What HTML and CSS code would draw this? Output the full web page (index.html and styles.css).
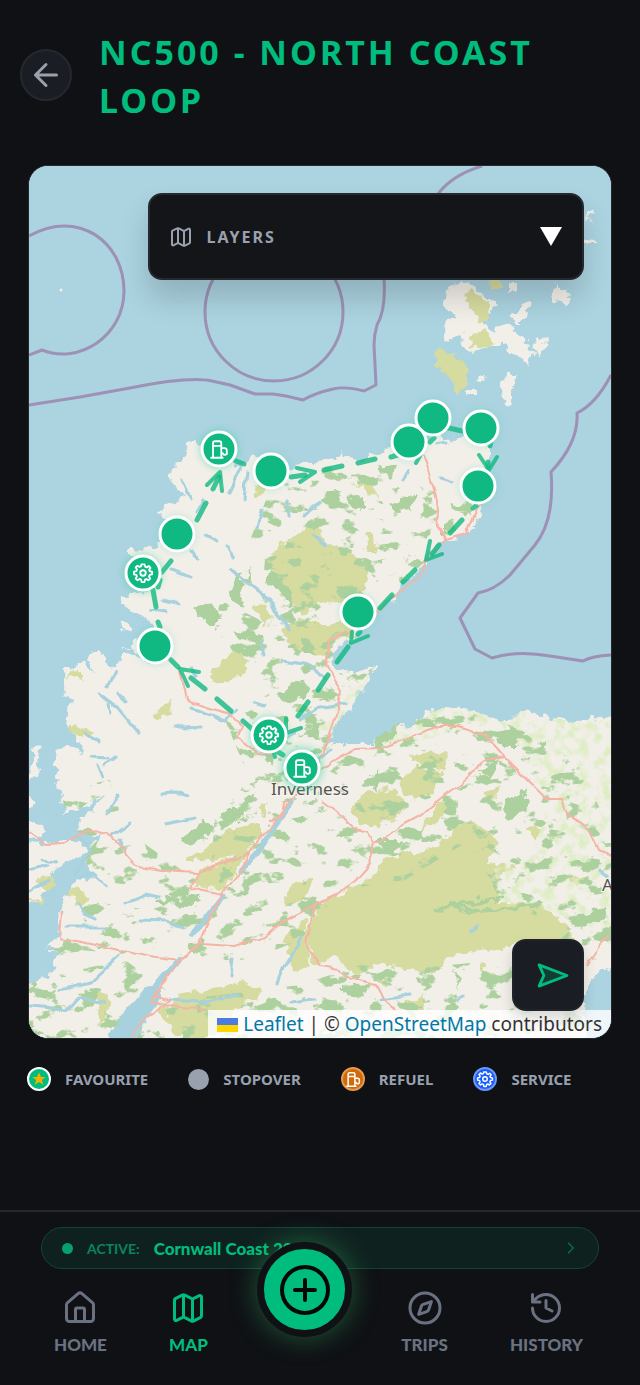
FILE: index.html
```html
<!DOCTYPE html>
<html lang="en">
<head>
<meta charset="utf-8">
<meta name="viewport" content="width=device-width, initial-scale=1">
<title>NC500 - North Coast Loop</title>
<link rel="stylesheet" href="styles.css">
</head>
<body>
<svg class="sprite" aria-hidden="true">
  <symbol id="i-map" viewBox="0 0 24 24"><path d="M14.106 5.553a2 2 0 0 0 1.788 0l3.659-1.83A1 1 0 0 1 21 4.619v12.764a1 1 0 0 1-.553.894l-4.553 2.277a2 2 0 0 1-1.788 0l-4.212-2.106a2 2 0 0 0-1.788 0l-3.659 1.83A1 1 0 0 1 3 19.381V6.618a1 1 0 0 1 .553-.894l4.553-2.277a2 2 0 0 1 1.788 0zM15 5.764v15M9 3.236v15"/></symbol>
  <symbol id="i-gear" viewBox="-12 -12 24 24"><path d="M-1.700 -9.500H1.700L2.300 -7.000L4.200 -6.100L6.300 -7.700L8.200 -5.600L6.700 -3.400L7.300 -1.900L9.900 -1.500V1.500L7.300 2.100L6.500 3.900L7.900 6.000L5.900 8.000L3.700 6.600L2.200 7.200L1.600 9.900H-1.500L-2.100 7.200L-3.800 6.500L-6.000 8.000L-8.000 6.000L-6.600 3.800L-7.300 2.000L-9.900 1.500V-1.500L-7.200 -2.100L-6.500 -3.800L-8.000 -6.000L-6.000 -8.000L-3.800 -6.600L-2.200 -7.200Z"/><circle r="3"/></symbol>
  <symbol id="i-fuel" viewBox="-12 -12 24 24"><path d="M-8.500 9.500H4M-6.500 9.500V-6.500a2 2 0 0 1 2-2H.5a2 2 0 0 1 2 2V9.500M-6.500 -3.500H2.500M2.500 -1H6a2.500 2.500 0 0 1 2.500 2.500V3.500a2 2 0 0 1-4 1.500L2.500 4"/></symbol>
</svg>

<header class="header">
  <button class="back" aria-label="Back"><svg viewBox="0 0 24 24"><path d="M19 12H5M12 19l-7-7 7-7"/></svg></button>
  <h1>NC500 - NORTH COAST LOOP</h1>
</header>

<main>
  <section class="map" aria-label="Route map">
    <svg class="map-canvas" viewBox="29 166 582 872">
      <defs>
        <filter id="rough" x="0" y="0" width="1" height="1"><feTurbulence type="fractalNoise" baseFrequency=".09" numOctaves="3" seed="4"/><feDisplacementMap in="SourceGraphic" scale="14" xChannelSelector="R" yChannelSelector="G"/></filter>
        <filter id="wobble" x="-.1" y="-.1" width="1.2" height="1.2"><feTurbulence type="fractalNoise" baseFrequency=".06" numOctaves="2" seed="9"/><feDisplacementMap in="SourceGraphic" scale="7" xChannelSelector="R" yChannelSelector="G"/></filter>
        <filter id="woods" x="0" y="0" width="1" height="1"><feTurbulence type="fractalNoise" baseFrequency=".05 .07" numOctaves="5" seed="12"/><feColorMatrix values="0 0 0 0 .68  0 0 0 0 .82  0 0 0 0 .62  0 0 0 14 -8.300"/><feComposite in2="SourceGraphic" operator="in"/></filter>
        <filter id="fields" x="0" y="0" width="1" height="1"><feTurbulence type="fractalNoise" baseFrequency=".09" numOctaves="4" seed="31"/><feColorMatrix values="0 0 0 0 .87  0 0 0 0 .93  0 0 0 0 .77  0 0 0 4 -1.800"/><feComposite in2="SourceGraphic" operator="in"/></filter>
        <filter id="soft" x="-1" y="-1" width="3" height="3"><feGaussianBlur stdDeviation="4"/></filter>
        <clipPath id="land-clip"><use href="#mainland"/></clipPath>
        <path id="mainland" d="M188 441L184 458L172 470L170 482L178 490L188 493L180 500L168 505L160 512L158 515L170 520L163 530L165 542L150 548L132 549L128 552L133 560L140 570L150 588L135 593L120 595L121 602L130 612L142 618L154 624L150 636L128 646L137 655L122 654L115 670L106 665L100 647L92 650L89 660L93 672L84 664L65 668L63 690L70 700L66 725L78 741L85 757L70 747L62 748L55 758L55 778L60 790L66 812L75 812L92 800L104 797L92 810L80 820L77 832L92 836L104 833L90 848L84 862L96 878L80 880L66 897L60 910L62 930L47 948L60 952L55 965L50 977L40 978L20 984V1048H113L133 1013L155 995L146 1020L132 1048H586L585 1010L586 990L592 978L603 972L620 962V715L600 720L570 721L545 716L522 711L500 722L475 711L450 706L425 712L408 730L402 724L385 736L371 744L345 744L333 743L326 750L329 739L342 716L352 707L361 690L373 674L379 664L366 672L358 676L352 670L337 672L332 664L333 655L338 644L352 640L358 632L370 620L380 607L393 597L405 582L420 572L427 558L433 548L445 540L463 537L470 530L482 515L486 500L486 475L492 456L490 442L494 436L470 433L455 442L445 441L436 431L430 436L425 446L400 452L388 450L375 456L355 460L343 458L341 450L334 459L320 459L314 464L300 464L286 470L262 462L252 454L245 463L236 468L226 450L205 447Z"/>
      </defs>
      <rect x="29" y="166" width="582" height="872" fill="#abd3e0"/>
      <g fill="none" stroke="#9d91b5" stroke-width="3" stroke-linejoin="round">
        <path d="M29 236C78 208 124 242 124 291C124 336 79 365 42 350L29 355M482 166Q452 175 438 194M29 405L80 397L130 388Q190 376 212 381L230 385L255 394H273L286 396L303 400Q315 393 333 389Q345 386 364 391L376 385L374 345Q374 335 377 325Q386 310 384 279M611 375Q596 404 577 413Q579 442 551 472Q555 520 535 545L510 575Q495 590 478 593L460 618L475 649L492 658Q517 650 550 656L583 661Q592 656 611 655"/>
        <circle cx="274" cy="312" r="69"/>
      </g>
      <circle cx="61" cy="290" r="1.500" fill="#f2efe9"/>

      <g filter="url(#rough)">
        <use href="#mainland" fill="#f2efe9"/>
        <path fill="#f2efe9" d="M446 290L462 281L476 290L497 305L490 314L477 318L492 330L505 327L512 325L514 336L525 340L533 351L530 365L517 357L504 345L490 345L475 353L464 346L463 333L448 343L444 325L455 314L444 306ZM533 345L545 337L544 350L538 353ZM511 315L530 302L528 320L516 320ZM549 303L556 286L552 282L567 290L572 297L566 305L559 298ZM503 375L519 375L512 390L512 405L504 407L501 393ZM466 391H477V397H466ZM480 375L489 373L484 382L478 383ZM587 213L594 209L590 222ZM587 234L596 243L586 243ZM508 282H517V293H508ZM36 750L42 747L37 773L25 785L31 765ZM25 785L34 804L25 812ZM25 822L42 823L46 831L39 838L25 835ZM25 839L47 845L66 838L90 846L80 860L67 862L55 868L48 882L37 902L25 906ZM124 645L128 648L122 648ZM121 620L128 622L129 631L119 630Z"/>
        <g fill="#d6dba0">
          <path d="M463 295L470 290L489 302L488 318L480 325L472 310ZM434 354L441 348L455 356L467 366L467 384L456 393L447 380L441 368L433 364ZM470 336L485 330L497 340L490 346L471 347ZM486 281H503V288L492 288Z"/>
          <path d="M265 568L275 547L290 540L306 529L318 524L325 543L345 551L360 558L369 580L365 590L343 600L320 604L303 614L292 603L280 595Z"/>
          <path d="M283 625L303 618L321 625L350 625L354 636L335 640L323 656L300 649L284 640ZM250 607L263 605L275 618L264 622ZM207 675L222 663L235 647L251 661L238 678L216 681ZM253 490L266 481L265 497L255 499ZM350 483L372 486L380 500L366 490ZM365 531L374 536L380 552L371 552Z"/>
          <path d="M186 858L203 849L232 829L262 823L262 837L248 852L228 856L208 862ZM192 885L198 872L224 860L247 851L240 868L224 891L205 887ZM284 905L291 885L313 878L302 900L286 908ZM397 778L418 768L441 772L435 793L406 796ZM350 810L365 792L394 788L404 802L399 818L367 828ZM407 755L450 752L444 770L412 763ZM418 834L440 803L450 805L433 825ZM485 794L500 786L494 805ZM525 828H542L537 842ZM567 874L586 879L575 886Z"/>
          <path d="M305 935L320 903L365 880L391 855L430 850L466 822L490 830L499 845L486 862L515 867L496 880L498 902L540 903L568 926L573 942L511 945L453 956L434 972L375 964L355 975L335 955L315 966Z"/>
          <path d="M160 1010L178 997L245 980L258 990L260 1000L240 1003L215 1038H175ZM285 935L305 918L310 966L292 972ZM68 728L80 724L95 732L85 737L72 737ZM152 715L175 701L170 713L158 717ZM35 880L48 874L55 884L43 890ZM68 893L78 885L91 902L78 904ZM30 900L45 898L38 906ZM96 990L109 995L107 1020L100 1025ZM65 680L75 667L82 678L74 675ZM255 810L267 805L264 815ZM480 963L494 975L484 972ZM408 1003L423 996L425 1010H405ZM378 980L390 979L384 990Z"/>
        </g>
      </g>

      <g clip-path="url(#land-clip)">
        <path filter="url(#fields)" d="M333 743L450 706L611 715V940L580 930L560 880L530 860L550 800L500 722L400 745ZM340 700L379 660L330 745L310 730ZM490 870L560 850L611 900V930L560 915L500 900Z"/>
        <path filter="url(#woods)" d="M322 720L400 720L450 706L535 725L575 760L611 830V960H540L570 930L500 900L470 840L405 880L340 890L300 940L250 960L190 960L80 950L29 1038V970L80 900L150 910L210 890L215 810L250 780L225 720L275 690L240 660L215 630L220 600L260 620L265 560L250 540L270 490L340 460L390 470L470 510L450 540L370 610L332 664L378 664Z"/>
        <path filter="url(#woods)" d="M62 790L110 780L125 830L210 890L180 900L60 880ZM300 985L360 965L400 970L500 960L585 1010V1038H29V980L125 960L180 1000Z"/>
      </g>
      <g fill="#add19e" filter="url(#rough)">
        <path d="M266 570L280 577L292 590L294 610L285 597L268 583ZM230 606L244 603L240 600L248 565L250 585L235 573ZM193 610L214 605L221 617L213 628ZM234 630L262 634L263 645L240 639ZM378 465L396 466L393 480L384 475ZM327 491L340 490L339 505L326 499ZM346 500L362 496L362 512L350 507ZM388 506L414 494L411 511L396 512ZM442 526L454 519L450 533L442 533ZM450 505L473 503L469 512L449 510ZM378 738L403 723L386 745L372 746ZM505 800L524 791L527 810L515 815L507 820ZM498 738L520 731L519 745H500ZM375 842L405 842L390 853ZM538 747L546 740V749ZM480 770L499 762L490 778ZM576 915L605 908L606 920L580 928ZM368 782L382 770L376 790ZM158 900L205 895L193 905L155 904ZM302 640L318 645L316 652H304ZM351 973H363L360 979H350ZM188 942H207L202 952L191 950ZM342 987L370 985L363 997L345 994ZM220 870L231 867L229 878L221 881ZM320 700L333 688L330 704ZM300 735L320 725L318 737ZM180 840L205 820L212 832L190 847ZM457 965L462 985L458 991ZM275 695L300 680L310 690L290 705ZM262 750L275 745L270 765ZM222 815L245 800L258 790L240 820L220 828Z"/>
        <path fill="none" stroke="#add19e" stroke-width="4" d="M435 910L465 904L485 900L505 897M450 903L470 912L540 905"/>
      </g>

      <g filter="url(#wobble)" fill="none" stroke="#a8d1de" stroke-width="3" stroke-linecap="round" stroke-linejoin="round">
        <path d="M292 803L273 830L257 853L241 870M224 896L203 922L192 935" stroke-width="5"/>
        <path d="M178 960L155 988" stroke-width="6"/>
        <path d="M151 996L119 1036" stroke-width="20"/>
        <path d="M231 570L249 584L262 594L273 605L278 616M230 492L242 467M244 500L247 472M205 534L217 542M172 570L190 577M190 552L197 558M257 528L262 510M287 501L289 516M100 694L118 708L138 732M85 732L100 742M118 692L126 703M108 686L115 672M90 757L108 758M97 765L102 777M108 813L119 795M165 824L195 818M160 793L176 792L188 796M176 726L187 729L202 728M190 668L195 677M138 655L150 662M112 835L130 822M120 840L125 850M76 835L90 850L75 875M80 878L94 874L107 886M127 903L145 895L159 898M140 920L165 921L183 927M67 927L108 927M78 905L84 914L94 919M120 955L90 983L60 990M29 1007L65 1010L80 997L103 1003M108 704L110 712M277 983L283 968L302 938M230 976L232 959M170 1000L200 1002L238 995M290 1003L315 1000M190 707L225 720L235 708M300 720L315 710L345 704M288 630L280 616M320 758L331 750M275 745L295 732M305 515L320 503M313 535L325 545M403 480L408 470M438 445L447 443M440 478L453 482M380 1000L410 996M457 1000L463 997M470 932L478 926M600 870L608 876M163 600L178 604M150 610L165 612M182 480L190 500M203 500L196 512M227 545L232 558"/>
        <path d="M29 870L48 865M30 890L50 880M41 860L57 862M105 765L115 757M255 703L265 706M283 661L310 665L325 680M260 640L264 655"/>
      </g>
      <g filter="url(#wobble)" fill="none" stroke="#f5b4a5" stroke-width="2" stroke-linejoin="round">
        <path d="M180 670L187 700L204 706L229 714L242 726L238 738L258 753L275 755M29 832L48 845L61 844L78 833L107 832L124 849L126 855L135 865L160 870L198 872L216 865L238 860L250 851L241 870L223 894L207 923L199 943L178 961L155 996L151 1002L165 1005L178 1008L205 1009M155 996L170 1001L140 1022L132 1038M198 872L191 888L223 895M250 851L272 826L292 800L305 780L327 766L355 749L380 748L440 727L458 727L485 735L505 757L531 783L548 799H562L568 815L587 825L599 850L611 856M505 757L485 760L466 780L440 798L420 815L405 823L380 841L374 843M322 801L341 815L355 829L368 832L374 843L370 864L355 881L337 894L313 906L282 922L265 937L235 946L200 944L178 961L150 957L105 947L60 938L62 912M313 906L306 945L320 966L340 969L352 979L377 984L385 1000L397 1011M319 766L335 720L341 690L333 677L327 665L328 640L350 632L370 620L393 597L425 571L427 558L446 540L466 534L476 510L486 500M446 540L439 526L436 500L428 470L422 455M586 965L600 945L611 935M286 800L282 818L270 820"/>
      </g>
      <g class="place"><text x="310" y="795" text-anchor="middle">Inverness</text><text x="602" y="891">A</text></g>

      <g fill="none" stroke="#10b981" stroke-opacity=".8" stroke-width="5" stroke-linecap="round" stroke-linejoin="round">
        <path d="M236 461L244 464M291 477L305 475M213 489L219 477M197 520L206 503M162 572L171 561M158 587L160 580M153 590L156 607M158 622L160 627M171 660L178 667M191 678L205 689M217 699L231 711M243 721L252 729M324 470L342 466M358 463L375 459M391 457L398 455M430 442L434 438M449 428L462 431M490 446L491 442M488 462V468M473 508L476 506M450 533L462 520M432 554L439 545M403 582L415 570M380 608L392 595M358 634L360 632M337 662L348 647M318 690L328 675M298 716L308 702M278 752L283 755"/>
        <path stroke-width="4" d="M297 468L315 472L300 482M207 485L220 472L222 491M199 672L180 669L188 686M416 463L420 456M479 455L489 470L497 457M430 541L426 560L442 554M352 632L351 643L368 636M286 718V733L301 728M274 753L275 757"/>
      </g>
      <g fill="#34d399" opacity=".65" filter="url(#soft)"><circle cx="219" cy="449" r="18"/><circle cx="143" cy="573" r="18"/><circle cx="269" cy="735" r="18"/><circle cx="302" cy="768" r="20"/></g>
      <g fill="#34d399" opacity=".3" filter="url(#soft)"><circle cx="271" cy="471" r="18"/><circle cx="177" cy="534" r="18"/><circle cx="155" cy="646" r="18"/><circle cx="358" cy="612" r="18"/><circle cx="478" cy="486" r="18"/><circle cx="481" cy="428" r="18"/><circle cx="433" cy="418" r="18"/><circle cx="409" cy="442" r="18"/></g>
      <g class="pins">
        <circle cx="219" cy="449" r="17"/><circle cx="271" cy="471" r="17"/><circle cx="177" cy="534" r="17"/><circle cx="143" cy="573" r="17"/><circle cx="155" cy="646" r="17"/><circle cx="433" cy="418" r="17"/><circle cx="409" cy="442" r="17"/><circle cx="481" cy="428" r="17"/><circle cx="478" cy="486" r="17"/><circle cx="358" cy="612" r="17"/><circle cx="269" cy="735" r="17"/><circle cx="302" cy="768" r="17"/>
      </g>
      <g class="line">
        <use href="#i-fuel" x="208" y="438" width="22" height="22"/><use href="#i-gear" x="132" y="562" width="22" height="22"/><use href="#i-gear" x="258" y="724" width="22" height="22"/><use href="#i-fuel" x="291" y="757" width="22" height="22"/>
      </g>
    </svg>
    <button class="layers"><svg><use href="#i-map"/></svg><span>LAYERS</span><i class="caret"></i></button>
    <button class="locate" aria-label="Locate me"><svg viewBox="0 0 34 26"><path d="M2 2L31 13L2 24L7 13Z"/></svg></button>
    <div class="attribution"><svg viewBox="0 0 12 8"><path fill="#4C7BE1" d="M0 0h12v4H0z"/><path fill="#FFD500" d="M0 4h12v4H0z"/></svg> <a href="#">Leaflet</a> | © <a href="#">OpenStreetMap</a> contributors</div>
  </section>

  <ul class="legend">
    <li><span class="key favourite"><svg viewBox="0 0 24 24"><path d="M12 2l2.900 7H22l-5.700 4.500L18.500 21 12 16.600 5.500 21l2.200-7.500L2 9h7.100z"/></svg></span>FAVOURITE</li>
    <li><span class="key stopover"></span>STOPOVER</li>
    <li><span class="key refuel"><svg class="line"><use href="#i-fuel"/></svg></span>REFUEL</li>
    <li><span class="key service"><svg class="line"><use href="#i-gear"/></svg></span>SERVICE</li>
  </ul>
</main>

<footer class="dock">
  <button class="active-trip"><i class="dot"></i><span class="tag">ACTIVE:</span><span class="trip">Cornwall Coast 2024</span><svg viewBox="0 0 24 24"><path d="M9 4l8 8-8 8"/></svg></button>
  <nav class="tabs">
    <a href="#"><svg viewBox="0 0 24 24"><path d="M15 21v-8a1 1 0 0 0-1-1h-4a1 1 0 0 0-1 1v8M3 10a2 2 0 0 1 .709-1.528l7-5.999a2 2 0 0 1 2.582 0l7 5.999A2 2 0 0 1 21 10v9a2 2 0 0 1-2 2H5a2 2 0 0 1-2-2z"/></svg>HOME</a>
    <a href="#" class="current"><svg><use href="#i-map"/></svg>MAP</a>
    <button class="add" aria-label="Add"><svg viewBox="0 0 52 52"><circle cx="26" cy="26" r="23"/><path d="M26 16v20M16 26h20"/></svg></button>
    <a href="#"><svg viewBox="0 0 24 24"><circle cx="12" cy="12" r="10"/><path d="M16.240 7.760l-1.804 5.411a2 2 0 0 1-1.265 1.265L7.760 16.240l1.804-5.411a2 2 0 0 1 1.265-1.265z"/></svg>TRIPS</a>
    <a href="#"><svg viewBox="0 0 24 24"><path d="M3 12a9 9 0 1 0 9-9 9.750 9.750 0 0 0-6.740 2.740L3 8M3 3v5h5M12 7v5l4 2"/></svg>HISTORY</a>
  </nav>
</footer>
</body>
</html>
```
FILE: styles.css
```css
* { box-sizing: border-box; }
body {
  margin: 0;
  min-height: 100vh;
  display: flex;
  flex-direction: column;
  background: #0f1115;
  color: #99a1af;
  font-family: "Noto Sans", sans-serif;
}
button { font: inherit; color: inherit; padding: 0; cursor: pointer; }
a { text-decoration: none; }
.sprite { position: absolute; width: 0; height: 0; }
filter * { color-interpolation-filters: sRGB; }

.header {
  display: flex;
  align-items: center;
  gap: 27px;
  padding: 28px 20px 41px;
}
.back {
  flex: none;
  width: 52px;
  height: 52px;
  display: grid;
  place-items: center;
  margin-top: -2px;
  border: 2px solid #25282e;
  border-radius: 50%;
  background: #1a1d23;
}
.back svg { width: 36px; fill: none; stroke: #99a1af; stroke-width: 2; stroke-linecap: round; stroke-linejoin: round; }
h1 {
  margin: 0;
  color: #00bc7d;
  font-size: 34px;
  line-height: 48px;
  letter-spacing: 3px;
}

main { padding: 0 28px; }
.map {
  position: relative;
  overflow: hidden;
  border: 1px solid #25282e;
  border-radius: 20px;
  background: #abd3e0;
}
.map-canvas { display: block; width: 100%; height: auto; }
.place { font-size: 17px; fill: #55534f; stroke: #f7f5f0; stroke-width: 2px; paint-order: stroke; }
.pins { fill: #10b981; stroke: #fff; stroke-width: 3px; }
.line { fill: none; stroke: #fff; stroke-width: 2px; stroke-linejoin: round; stroke-linecap: round; }

.layers {
  position: absolute;
  top: 27px;
  right: 27px;
  width: 75%;
  height: 87px;
  display: flex;
  align-items: center;
  gap: 14px;
  padding: 0 20px 0 19px;
  border: 2px solid #25282e;
  border-radius: 14px;
  background: #131518;
  box-shadow: 0 18px 30px rgba(0, 0, 0, .16);
  font-size: 16px;
  font-weight: 700;
  letter-spacing: 2px;
}
.layers svg { width: 24px; height: 24px; fill: none; stroke: currentColor; stroke-width: 2; }
.caret {
  margin-left: auto;
  border: 11px solid transparent;
  border-top: 19px solid #fff;
  border-bottom: 0;
}
.locate {
  position: absolute;
  right: 27px;
  bottom: 27px;
  z-index: 1;
  width: 72px;
  height: 72px;
  padding-left: 10px;
  border: 2px solid #20242a;
  border-radius: 14px;
  background: #1a1d23;
  box-shadow: 0 8px 14px rgba(0, 0, 0, .14);
}
.locate svg { display: block; width: 33px; height: 25px; margin: auto; fill: #123c34; stroke: #00bc7d; stroke-width: 3; stroke-linejoin: round; }
.attribution {
  position: absolute;
  right: 0;
  bottom: 0;
  padding: 0 9px;
  background: rgba(255, 255, 255, .8);
  color: #333;
  font-size: 19px;
  line-height: 28px;
  white-space: nowrap;
}
.attribution a { color: #0078a8; }
.attribution svg { width: 21px; height: 14px; vertical-align: -1px; }

.legend {
  display: flex;
  gap: 40px;
  margin: 0;
  padding: 28px 0 0;
  list-style: none;
  font-size: 15px;
  line-height: 24px;
  font-weight: 700;
}
.legend li { display: flex; align-items: center; gap: 14px; }
.key { width: 24px; height: 24px; display: grid; place-items: center; border-radius: 50%; }
.key svg { width: 18px; height: 18px; }
.favourite { margin-left: -1px; border: 2px solid #fff; background: #00bc7d; }
.favourite svg { width: 16px; height: 16px; fill: #f0b100; }
.stopover { width: 21px; height: 21px; background: #99a1af; }
.refuel { border: 2px solid #e39a4e; background: #d06a08; }
.service { border: 2px solid #6f97f5; background: #155dfc; }

.dock {
  margin-top: auto;
  padding: 15px 41px 30px;
  border-top: 2px solid #25282e;
  background: #0f1115;
  font-family: Lato, sans-serif;
}
.active-trip {
  width: 100%;
  height: 42px;
  display: flex;
  align-items: center;
  padding: 0 20px;
  border: 1px solid #0e4535;
  border-radius: 21px;
  background: #0f211f;
  color: #00bc7d;
}
.dot { width: 11px; height: 11px; margin-right: 14px; border-radius: 50%; background: #06a06d; }
.tag { margin-right: 14px; color: #08865d; font-size: 14px; font-weight: 700; }
.trip { font-size: 17px; font-weight: 900; }
.active-trip svg { width: 16px; height: 16px; margin-left: auto; fill: none; stroke: #08704e; stroke-width: 2; }
.tabs {
  display: flex;
  justify-content: space-between;
  padding: 21px 16px 0 13px;
}
.tabs a {
  display: flex;
  flex-direction: column;
  align-items: center;
  gap: 9px;
  color: #6a7282;
  font-size: 17px;
  line-height: 20px;
  font-weight: 900;
}
.tabs a.current { color: #00bc7d; }
.tabs a svg { width: 36px; height: 36px; fill: none; stroke: currentColor; stroke-width: 2; stroke-linecap: round; stroke-linejoin: round; }
.add {
  width: 95px;
  height: 95px;
  margin: -48px -13px -32px;
  display: grid;
  place-items: center;
  border: 7px solid #0f1115;
  border-radius: 50%;
  background: #00bc7d;
  box-shadow: 0 0 28px rgba(60, 200, 110, .4);
  z-index: 1;
}
.add svg { width: 52px; height: 52px; fill: none; stroke: #050807; stroke-width: 4; stroke-linecap: round; }
```
